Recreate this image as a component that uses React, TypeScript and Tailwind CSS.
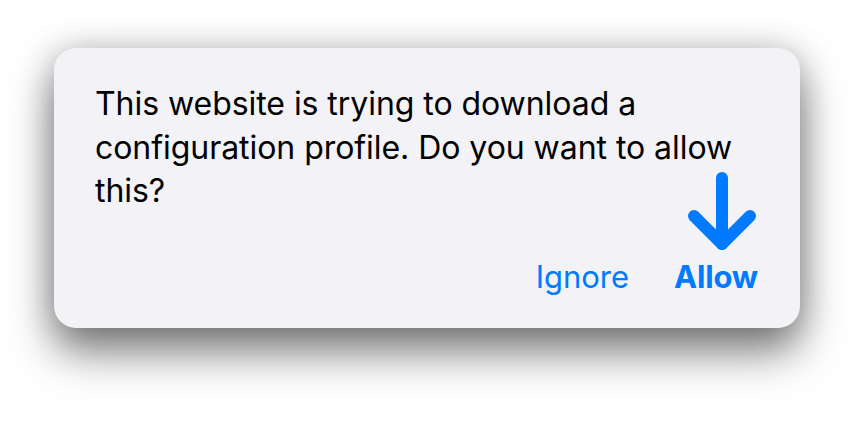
export default function App() {
  return (
    <div className="w-[854px] h-[421px] bg-white overflow-hidden" style={{ fontFamily: 'Inter, "Noto Sans", sans-serif' }}>
      <div className="relative ml-[54px] mt-[48px] w-[746px] h-[280px] rounded-[22px] bg-[#f2f2f7] shadow-[0_24px_44px_rgba(0,0,0,0.5),0_0_34px_rgba(0,0,0,0.2)] flex flex-col">
        <p className="pl-[41px] pt-[34px] text-[32px] leading-[43.5px] text-black tracking-[-0.05px]">
          This website is trying to download a
          <br />
          configuration profile. Do you want to allow
          <br />
          this?
        </p>
        <div className="mt-auto mb-[28px] flex justify-end items-baseline gap-[45px] pr-[42px] text-[31px] text-[#007aff]">
          <span>Ignore</span>
          <span className="font-bold tracking-[-0.2px]">Allow</span>
        </div>
        <svg
          className="absolute left-[634px] top-[124px]"
          width="70"
          height="82"
          viewBox="0 0 70 82"
          fill="none"
          stroke="#007aff"
          strokeWidth="12"
          strokeLinecap="round"
          strokeLinejoin="round"
        >
          <path d="M34 6 V72" />
          <path d="M6 44 L34 72 L62 44" />
        </svg>
      </div>
    </div>
  );
}
